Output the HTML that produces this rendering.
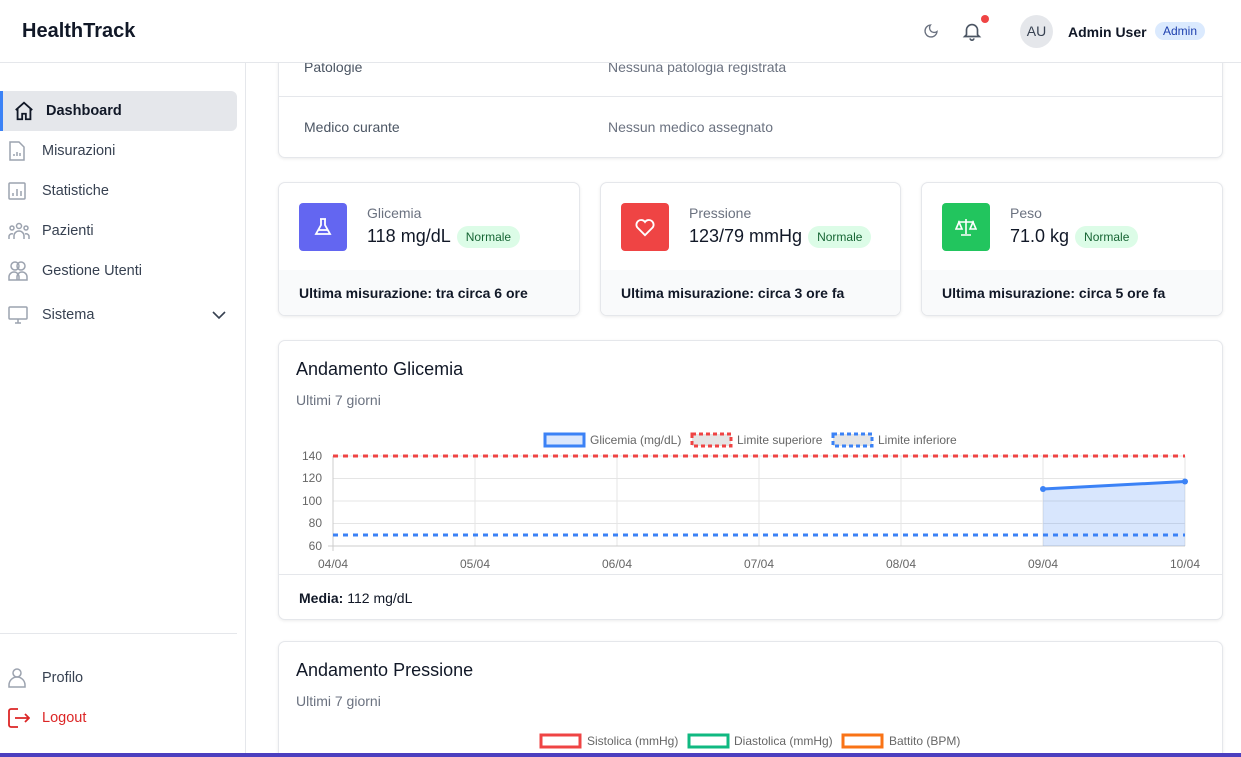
<!DOCTYPE html>
<html><head><meta charset="utf-8"><style>
*{box-sizing:border-box;margin:0;padding:0}
html,body{width:1241px;height:757px;overflow:hidden}
body{background:#fff;font-family:"Liberation Sans","DejaVu Sans",sans-serif;color:#111827;position:relative}
.hdr{position:absolute;left:0;top:0;width:1241px;height:63px;border-bottom:1px solid #e5e7eb;background:#fff;z-index:5}
.logo{position:absolute;left:22px;top:20px;font-size:20px;font-weight:bold;color:#111827}
.side{position:absolute;left:0;top:63px;width:246px;height:694px;border-right:1px solid #e5e7eb}
.nav{position:absolute;left:0;width:237px;height:40px;display:flex;align-items:center;font-size:14.5px;color:#374151}
.nav svg{position:absolute;left:8px}
.nav span{position:absolute;left:42px}
.main{position:absolute;left:246px;top:63px;width:995px;height:694px;background:#fff;overflow:hidden}
.card{position:absolute;border:1px solid #e5e7eb;border-radius:7px;background:#fff;box-shadow:0 1px 3px rgba(0,0,0,.08);overflow:hidden}
.gray{color:#6b7280}
.badge{display:inline-block;background:#dcfce7;color:#166534;font-size:12px;border-radius:11px;padding:4px 9px;vertical-align:middle;margin-left:6px}
.foot{position:absolute;left:0;right:0;bottom:0;height:45px;background:#f9fafb;font-size:14px;font-weight:bold;padding:15px 20px;color:#111827}
.ico{position:absolute;left:20px;top:20px;width:48px;height:48px;border-radius:4px;display:flex;align-items:center;justify-content:center}
</style></head><body>
<div class="hdr">
 <div class="logo">HealthTrack</div>
 <svg style="position:absolute;left:923px;top:23px" width="16" height="16" viewBox="0 0 24 24" fill="none" stroke="#6b7280" stroke-width="2"><path d="M21 12.8A9 9 0 1 1 11.2 3a7 7 0 0 0 9.8 9.8z"/></svg>
 <svg style="position:absolute;left:961px;top:20px" width="22" height="22" viewBox="0 0 24 24" fill="none" stroke="#4b5563" stroke-width="1.8"><path d="M18 16V11a6 6 0 0 0-12 0v5l-2 2h16z M10 20a2 2 0 0 0 4 0"/></svg>
 <div style="position:absolute;left:981px;top:15px;width:8px;height:8px;border-radius:50%;background:#ef4444"></div>
 <div style="position:absolute;left:1020px;top:15px;width:33px;height:33px;border-radius:50%;background:#e5e7eb;font-size:14px;color:#374151;text-align:center;line-height:33px">AU</div>
 <div style="position:absolute;left:1068px;top:24px;font-size:14px;font-weight:bold;color:#111827">Admin User</div>
 <div style="position:absolute;left:1155px;top:22px;background:#dbeafe;color:#1e40af;font-size:12px;border-radius:10px;padding:2px 8px">Admin</div>
</div>
<div class="side">
 <div class="nav" style="top:28px;left:0;background:#e5e7eb;border-radius:0 6px 6px 0;border-left:3px solid #3b82f6;color:#111827;font-weight:bold">
  <svg style="left:10px" width="22" height="22" viewBox="0 0 24 24" fill="none" stroke="#111827" stroke-width="2"><path d="M3 11l9-8 9 8M5 9.5V21h5v-6h4v6h5V9.5"/></svg><span style="left:43px">Dashboard</span></div>
 <div class="nav" style="top:68px"><svg width="18" height="20" viewBox="0 0 18 20" fill="none" stroke="#9ca3af" stroke-width="1.5"><path d="M2 1h9l5 5v13H2z M6 15v-2 M9 15v-4 M12 15v-3"/></svg><span>Misurazioni</span></div>
 <div class="nav" style="top:108px"><svg width="18" height="18" viewBox="0 0 18 18" fill="none" stroke="#9ca3af" stroke-width="1.5"><rect x="1" y="1" width="16" height="16" rx="1"/><path d="M5 14v-3 M9 14V7 M13 14V9"/></svg><span>Statistiche</span></div>
 <div class="nav" style="top:148px"><svg width="22" height="18" viewBox="0 0 22 18" fill="none" stroke="#9ca3af" stroke-width="1.5"><circle cx="11" cy="4" r="2.5"/><circle cx="4" cy="6" r="2"/><circle cx="18" cy="6" r="2"/><path d="M6 17v-3a5 5 0 0 1 10 0v3 M1 17v-3a3 3 0 0 1 4-2 M21 17v-3a3 3 0 0 0-4-2"/></svg><span>Pazienti</span></div>
 <div class="nav" style="top:188px"><svg width="20" height="20" viewBox="0 0 20 20" fill="none" stroke="#9ca3af" stroke-width="1.5"><circle cx="7" cy="5" r="4"/><circle cx="13" cy="5" r="4"/><path d="M1 19v-3a5 5 0 0 1 10 0v3z M9 19v-3a5 5 0 0 1 10 0v3z"/></svg><span>Gestione Utenti</span></div>
 <div class="nav" style="top:232px"><svg width="20" height="20" viewBox="0 0 20 20" fill="none" stroke="#9ca3af" stroke-width="1.5"><rect x="1" y="2" width="18" height="12" rx="1"/><path d="M7 18h6 M10 14v4"/></svg><span>Sistema</span>
  <svg style="left:212px" width="14" height="10" viewBox="0 0 14 10" fill="none" stroke="#374151" stroke-width="1.6"><path d="M1 2l6 6 6-6"/></svg></div>
 <div style="position:absolute;left:0;top:570px;width:237px;border-top:1px solid #e5e7eb"></div>
 <div class="nav" style="top:595px"><svg width="18" height="20" viewBox="0 0 18 20" fill="none" stroke="#9ca3af" stroke-width="1.5"><circle cx="9" cy="5" r="4"/><path d="M1 19v-2a6 6 0 0 1 16 0v2z"/></svg><span>Profilo</span></div>
 <div class="nav" style="top:635px;color:#dc2626"><svg width="22" height="20" viewBox="0 0 22 20" fill="none" stroke="#dc2626" stroke-width="1.8"><path d="M10 1H3a2 2 0 0 0-2 2v14a2 2 0 0 0 2 2h7 M7 10h14 M17 6l4 4-4 4"/></svg><span>Logout</span></div>
</div>
<div class="main">
 <div class="card" style="left:32px;top:-10px;width:945px;height:105px;">
  <div style="position:absolute;left:25px;top:5px;font-size:14px;color:#4b5563">Patologie</div>
  <div style="position:absolute;left:329px;top:5px;font-size:14px;color:#6b7280">Nessuna patologia registrata</div>
  <div style="position:absolute;left:0;right:0;top:42px;border-top:1px solid #e5e7eb"></div>
  <div style="position:absolute;left:25px;top:65px;font-size:14px;color:#4b5563">Medico curante</div>
  <div style="position:absolute;left:329px;top:65px;font-size:14px;color:#6b7280">Nessun medico assegnato</div>
 </div>
 <div class="card" style="left:32px;top:119px;width:302px;height:134px">
  <div class="ico" style="background:#6366f1"><svg width="20" height="20" viewBox="0 0 20 20" fill="none" stroke="#fff" stroke-width="1.8"><path d="M7 2h6 M8 2v6l-5 9h14l-5-9V2 M5 13h10"/></svg></div>
  <div class="gray" style="position:absolute;left:88px;top:22px;font-size:14px">Glicemia</div>
  <div style="position:absolute;left:88px;top:43px;font-size:18px">118 mg/dL<span class="badge">Normale</span></div>
  <div class="foot">Ultima misurazione: tra circa 6 ore</div>
 </div>
 <div class="card" style="left:354px;top:119px;width:301px;height:134px">
  <div class="ico" style="background:#ef4444"><svg width="22" height="20" viewBox="0 0 24 22" fill="none" stroke="#fff" stroke-width="2"><path d="M12 20l-8.5-8.5a5 5 0 0 1 8.5-6 5 5 0 0 1 8.5 6z"/></svg></div>
  <div class="gray" style="position:absolute;left:88px;top:22px;font-size:14px">Pressione</div>
  <div style="position:absolute;left:88px;top:43px;font-size:18px">123/79 mmHg<span class="badge">Normale</span></div>
  <div class="foot">Ultima misurazione: circa 3 ore fa</div>
 </div>
 <div class="card" style="left:675px;top:119px;width:302px;height:134px">
  <div class="ico" style="background:#22c55e"><svg width="22" height="20" viewBox="0 0 22 20" fill="none" stroke="#fff" stroke-width="1.6"><path d="M11 2v15 M6 18h10 M3 5h16 M4 5l-3 7h6z M18 5l-3 7h6z"/></svg></div>
  <div class="gray" style="position:absolute;left:88px;top:22px;font-size:14px">Peso</div>
  <div style="position:absolute;left:88px;top:43px;font-size:18px">71.0 kg<span class="badge">Normale</span></div>
  <div class="foot">Ultima misurazione: circa 5 ore fa</div>
 </div>
 <div class="card" style="left:32px;top:277px;width:945px;height:280px">
  <div style="position:absolute;left:17px;top:18px;font-size:18px">Andamento Glicemia</div>
  <div class="gray" style="position:absolute;left:17px;top:51px;font-size:14px">Ultimi 7 giorni</div>
  <div style="position:absolute;left:0;right:0;bottom:0;height:45px;border-top:1px solid #e5e7eb;font-size:14px;padding:15px 20px"><b>Media:</b> 112 mg/dL</div>
 </div>
 <div class="card" style="left:32px;top:578px;width:945px;height:116px;border-bottom:none;border-radius:7px 7px 0 0">
  <div style="position:absolute;left:17px;top:18px;font-size:18px">Andamento Pressione</div>
  <div class="gray" style="position:absolute;left:17px;top:51px;font-size:14px">Ultimi 7 giorni</div>
 </div>
</div>
<svg style="position:absolute;left:0;top:0" width="1241" height="757" font-family="Liberation Sans, sans-serif" font-size="12" fill="#666">
 <g stroke="#e5e5e5" stroke-width="1">
  <path d="M333 456H1185M333 478.5H1185M333 501H1185M333 523.5H1185"/>
  <path d="M475 456V546M617 456V546M759 456V546M901 456V546M1043 456V546M1185 456V546"/>
 </g>
 <path d="M333 456V551M328 546H1185" stroke="#ccc"/>
 <path d="M1043 489L1185 481.5V546H1043z" fill="rgba(59,130,246,.2)"/>
 <path d="M1043 489L1185 481.5" stroke="#3b82f6" stroke-width="3"/>
 <circle cx="1043" cy="489" r="3" fill="#3b82f6"/><circle cx="1185" cy="481.5" r="3" fill="#3b82f6"/>
 <path d="M333 456H1185" stroke="#ef4444" stroke-width="3" stroke-dasharray="5 5"/>
 <path d="M333 535H1185" stroke="#3b82f6" stroke-width="3" stroke-dasharray="5 5"/>
 <g text-anchor="end"><text x="322" y="460">140</text><text x="322" y="482">120</text><text x="322" y="505">100</text><text x="322" y="527">80</text><text x="322" y="550">60</text></g>
 <g text-anchor="middle"><text x="333" y="568">04/04</text><text x="475" y="568">05/04</text><text x="617" y="568">06/04</text><text x="759" y="568">07/04</text><text x="901" y="568">08/04</text><text x="1043" y="568">09/04</text><text x="1185" y="568">10/04</text></g>
 <rect x="545" y="434" width="39" height="12" fill="#dbe7fc" stroke="#3b82f6" stroke-width="3"/><text x="590" y="444">Glicemia (mg/dL)</text>
 <rect x="692" y="434" width="39" height="12" fill="#e5e5e5" stroke="#ef4444" stroke-width="3" stroke-dasharray="4 3"/><text x="737" y="444">Limite superiore</text>
 <rect x="833" y="434" width="39" height="12" fill="#e5e5e5" stroke="#3b82f6" stroke-width="3" stroke-dasharray="4 3"/><text x="878" y="444">Limite inferiore</text>
 <rect x="541" y="735" width="39" height="12" fill="#fff" stroke="#ef4444" stroke-width="3"/><text x="587" y="745">Sistolica (mmHg)</text>
 <rect x="689" y="735" width="39" height="12" fill="#fff" stroke="#10b981" stroke-width="3"/><text x="734" y="745">Diastolica (mmHg)</text>
 <rect x="843" y="735" width="39" height="12" fill="#fff" stroke="#f97316" stroke-width="3"/><text x="889" y="745">Battito (BPM)</text>
</svg>
<div style="position:absolute;left:0;top:753px;width:1241px;height:4px;background:#4c3fbf;z-index:6"></div>
</body></html>
